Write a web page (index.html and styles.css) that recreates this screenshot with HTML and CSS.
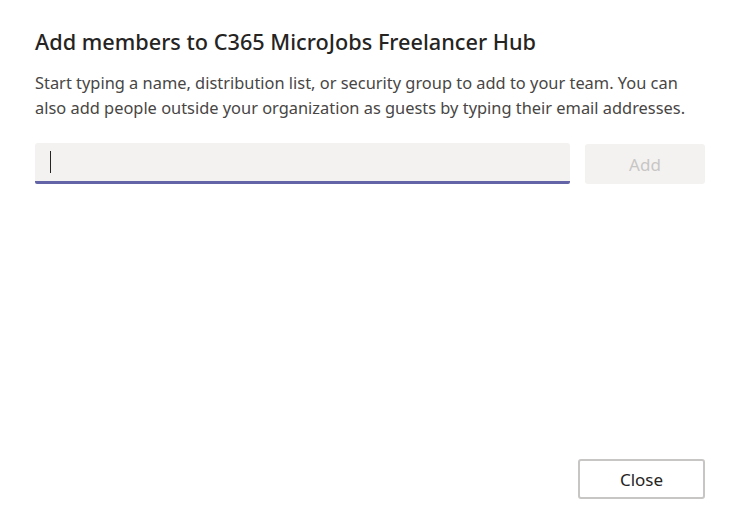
FILE: index.html
```html
<!DOCTYPE html>
<html>
<head>
<meta charset="utf-8">
<link rel="stylesheet" href="styles.css">
</head>
<body>
<div class="dialog">
  <h1 class="title">Add members to C365 MicroJobs Freelancer Hub</h1>
  <p class="desc">Start typing a name, distribution list, or security group to add to your team. You can also add people outside your organization as guests by typing their email addresses.</p>
  <div class="row">
    <div class="field"><span class="caret"></span></div>
    <button class="add">Add</button>
  </div>
  <div class="spacer"></div>
  <div class="footer">
    <button class="close">Close</button>
  </div>
</div>
</body>
</html>
```
FILE: styles.css
```css
html, body { margin: 0; padding: 0; background: #fff; }
body { font-family: "Segoe UI", "Noto Sans", "Open Sans", sans-serif; color: #252423; }
.dialog { width: 740px; height: 528px; box-sizing: border-box; padding: 26px 35px 29px 35px; display: flex; flex-direction: column; }
.title { margin: 0; font-size: 21.7px; font-weight: 500; line-height: 32px; color: #252423; }
.desc { margin: 12px 0 0 0; font-size: 16.4px; line-height: 25px; color: #484644; width: 670px; }
.row { display: flex; gap: 15px; margin-top: 23px; }
.field { width: 520px; height: 38px; background: #f3f2f1; border-radius: 3px 3px 2px 2px; border-bottom: 3px solid #6264a7; display: flex; align-items: center; padding-left: 15px; box-sizing: content-box; }
.caret { width: 1px; height: 22px; background: #252423; }
.add { width: 120px; height: 40px; margin-top: 1px; border: none; background: #f3f2f1; color: #c8c6c4; border-radius: 3px; font: inherit; font-size: 17px; }
.spacer { flex: 1; }
.footer { display: flex; justify-content: flex-end; }
.close { width: 127px; height: 40px; border: 2px solid #c8c6c4; border-radius: 3px; background: #fff; font: inherit; font-size: 17px; color: #252423; }
```
